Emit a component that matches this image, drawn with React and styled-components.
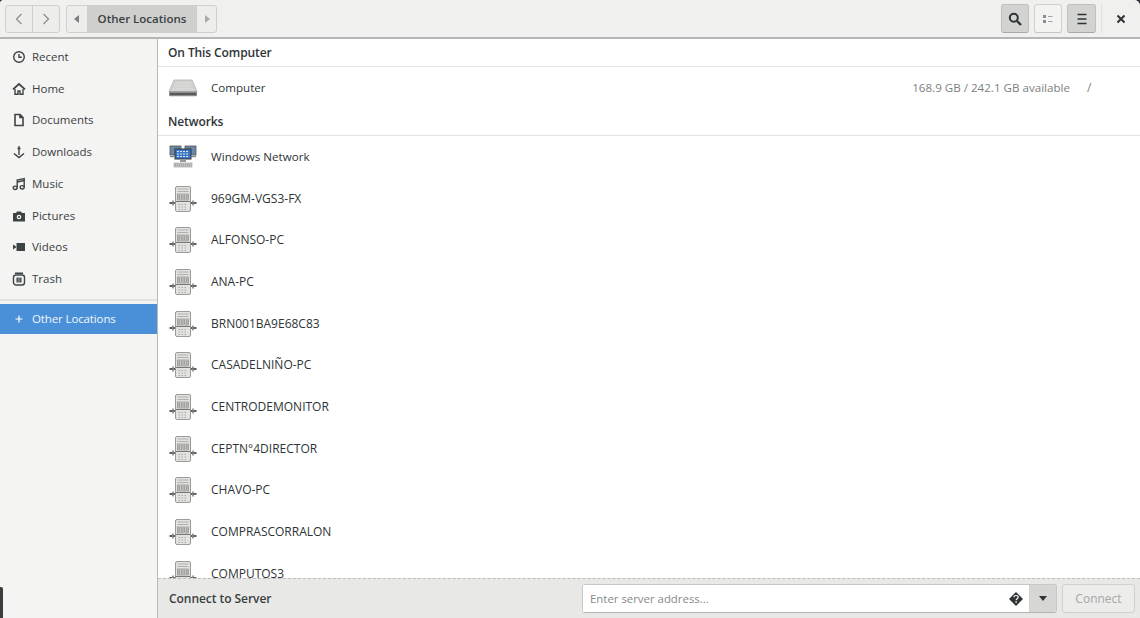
import styled, { createGlobalStyle } from 'styled-components'

const GlobalStyle = createGlobalStyle`
  html, body {
    margin: 0;
    padding: 0;
    background: #2e3032;
  }
  * {
    box-sizing: border-box;
  }
`

const places = [
  { name: 'Recent', icon: 'recent' },
  { name: 'Home', icon: 'home' },
  { name: 'Documents', icon: 'documents' },
  { name: 'Downloads', icon: 'downloads' },
  { name: 'Music', icon: 'music' },
  { name: 'Pictures', icon: 'pictures' },
  { name: 'Videos', icon: 'videos' },
  { name: 'Trash', icon: 'trash' },
]

const hosts = [
  '969GM-VGS3-FX',
  'ALFONSO-PC',
  'ANA-PC',
  'BRN001BA9E68C83',
  'CASADELNIÑO-PC',
  'CENTRODEMONITOR',
  'CEPTN°4DIRECTOR',
  'CHAVO-PC',
  'COMPRASCORRALON',
  'COMPUTOS3',
]

function PlaceIcon({ kind }) {
  const stroke = { fill: 'none', stroke: '#3d4345', strokeWidth: 1.4 }
  return (
    <svg width="14" height="14" viewBox="0 0 14 14">
      {kind === 'recent' && (
        <>
          <circle cx="7" cy="7" r="5.3" {...stroke} />
          <path d="M7 4v3.2h2.8" {...stroke} />
        </>
      )}
      {kind === 'home' && (
        <>
          <path d="M1 7.4 7 2l6 5.4" {...stroke} strokeWidth="1.7" />
          <path d="M3 7v5.2h3V9h2v3.2h3V7" {...stroke} />
        </>
      )}
      {kind === 'documents' && <path d="M3 1.500h5l3 3v8H3zM8 1.500v3h3" {...stroke} strokeWidth="1.600" />}
      {kind === 'downloads' && (
        <>
          <path d="M7 1v9" {...stroke} />
          <path d="M5.500 3.500h3" {...stroke} />
          <path d="M2 8.500 7 12.500l5-4" {...stroke} strokeWidth="1.600" />
        </>
      )}
      {kind === 'music' && (
        <>
          <path d="M5.200 10.500V3l7-1.500v8.500" {...stroke} />
          <path d="M5.200 5l7-1.500" {...stroke} />
          <ellipse cx="3.200" cy="10.800" rx="2" ry="1.700" {...stroke} />
          <ellipse cx="10.200" cy="10.300" rx="2" ry="1.700" {...stroke} />
        </>
      )}
      {kind === 'pictures' && (
        <>
          <path d="M1 4h3l1-1.500h4L10 4h3v8.500H1z" fill="#3d4345" />
          <circle cx="7" cy="8" r="2.300" fill="#f4f4f3" />
          <circle cx="7" cy="8" r="1.100" fill="#3d4345" />
        </>
      )}
      {kind === 'videos' && (
        <>
          <rect x="4.500" y="3" width="8.500" height="8" fill="#3d4345" />
          <path d="M1 4.500 4 6.500v1L1 9.500z" fill="#3d4345" />
        </>
      )}
      {kind === 'trash' && (
        <>
          <rect x="1.500" y="3" width="11" height="10" rx="2.500" {...stroke} />
          <path d="M3 1.200h8M5.200 5.500v5M7 5.500v5M8.800 5.500v5" {...stroke} />
        </>
      )}
    </svg>
  )
}

function DriveIcon() {
  return (
    <svg width="30" height="20" viewBox="0 0 30 20">
      <path d="M6 2h18l5 11.500H1z" fill="#d2d2d0" stroke="#b0b0ae" strokeWidth="0.8" />
      <path d="M1 13.500h28v3.800a1 1 0 0 1-1 1H2a1 1 0 0 1-1-1z" fill="#8a8c8c" />
      <path d="M2 16h26" stroke="#47494a" strokeWidth="1.300" />
      <path d="M8 5h14M7 8h16M5 11h20" stroke="#e2e2e0" strokeWidth="1" strokeDasharray="2 1" />
    </svg>
  )
}

function WindowsNetworkIcon() {
  return (
    <svg width="28" height="24" viewBox="0 0 28 24">
      <rect x="1" y="1" width="11" height="9" fill="#6a88a6" stroke="#555" strokeWidth="0.8" />
      <rect x="16" y="1" width="11" height="9" fill="#6a88a6" stroke="#555" strokeWidth="0.8" />
      <rect x="6" y="4" width="16" height="10" fill="#3a78c6" stroke="#333" strokeWidth="1" />
      <path d="M8 6.500h12M8 9h12M8 11.500h12" stroke="#dbe5ee" strokeWidth="1" strokeDasharray="2 1" />
      <path d="M1 11.500h5M22 11.500h5" stroke="#888" strokeWidth="1.500" />
      <rect x="11" y="15" width="6" height="2" fill="#999" />
      <rect x="5" y="18" width="18" height="4" fill="#c4c4c4" stroke="#999" strokeWidth="0.6" />
      <path d="M6 20h16" stroke="#777" strokeWidth="0.800" strokeDasharray="1 1" />
    </svg>
  )
}

function ServerIcon() {
  return (
    <svg width="28" height="28" viewBox="0 0 28 28">
      <path d="M0.500 18h6M21.500 18h6" stroke="#5d5d5d" strokeWidth="2.200" />
      <path d="M4 15.500v5M24 15.500v5" stroke="#808080" strokeWidth="1.500" />
      <rect x="6.500" y="1.500" width="15" height="25" rx="1.500" fill="#e2e2e0" stroke="#9a9a98" strokeWidth="1" />
      <path d="M8.500 4h11M8.500 6.500h11" stroke="#b0b0ae" strokeWidth="1" />
      <rect x="8.500" y="9" width="11" height="6" fill="#c8c8c6" stroke="#808080" strokeWidth="0.600" />
      <path d="M9.500 11h9M9.500 13h9" stroke="#666" strokeWidth="0.800" strokeDasharray="1.500 1" />
      <path d="M6.500 16.500h15" stroke="#787878" strokeWidth="1" />
      <path d="M9.500 19.500h9M9.500 22h9M9.500 24.500h9" stroke="#a8a8a6" strokeWidth="1" strokeDasharray="1.500 1.500" />
    </svg>
  )
}

function App() {
  return (
    <>
      <GlobalStyle />
      <Window>
        <HeaderBar>
          <Linked>
            <HeaderButton $width={26}>
              <svg width="12" height="14" viewBox="0 0 12 14">
                <path d="M8.500 2 3.500 7l5 5" fill="none" stroke="#8d9092" strokeWidth="1.300" />
              </svg>
            </HeaderButton>
            <HeaderButton $width={27}>
              <svg width="12" height="14" viewBox="0 0 12 14">
                <path d="M3.500 2l5 5-5 5" fill="none" stroke="#8d9092" strokeWidth="1.300" />
              </svg>
            </HeaderButton>
          </Linked>
          <PathBar>
            <PathArrow $width={20}>
              <svg width="6" height="8" viewBox="0 0 6 8">
                <path d="M5 0v8L0 4z" fill="#7c7f80" />
              </svg>
            </PathArrow>
            <PathCurrent>Other Locations</PathCurrent>
            <PathArrow $width={19}>
              <svg width="6" height="8" viewBox="0 0 6 8">
                <path d="M1 0v8l5-4z" fill="#a8aaab" />
              </svg>
            </PathArrow>
          </PathBar>
          <Spacer />
          <ToolGroup>
            <ToolButton $pressed $width={28}>
              <svg width="16" height="16" viewBox="0 0 16 16">
                <circle cx="6.800" cy="6.800" r="4" fill="none" stroke="#2e3436" strokeWidth="2" />
                <path d="m10 10 4 4" stroke="#2e3436" strokeWidth="2.400" />
              </svg>
            </ToolButton>
            <ToolButton $width={28}>
              <svg width="12" height="10" viewBox="0 0 12 10">
                <path d="M1 1h3v3H1zM1 6h3v3H1z" fill="#8a8c8d" />
                <path d="M6 2.500h4.500M6 7.500h4.500" stroke="#a0a2a3" strokeWidth="1.200" />
              </svg>
            </ToolButton>
            <ToolButton $pressed $width={29}>
              <svg width="14" height="12" viewBox="0 0 14 12">
                <path d="M2.500 1.500h9M2.500 6h9M2.500 10.500h9" stroke="#2e3436" strokeWidth="1.600" />
              </svg>
            </ToolButton>
          </ToolGroup>
          <CloseZone>
            <svg width="10" height="10" viewBox="0 0 10 10">
              <path d="m1.500 1.500 7 7M8.500 1.500l-7 7" stroke="#2e3436" strokeWidth="2" />
            </svg>
          </CloseZone>
        </HeaderBar>
        <Body>
          <Sidebar>
            <PlaceList>
              {places.map((p) => (
                <Place key={p.name}>
                  <PlaceIcon kind={p.icon} />
                  <PlaceName>{p.name}</PlaceName>
                </Place>
              ))}
            </PlaceList>
            <SideDivider />
            <ActivePlace>
              <svg width="14" height="14" viewBox="0 0 14 14">
                <path d="M7 3.500v7M3.500 7h7" stroke="#fff" strokeWidth="1.200" />
              </svg>
              <ActiveName>Other Locations</ActiveName>
            </ActivePlace>
          </Sidebar>
          <Main>
            <Listing>
              <SectionTitle>On This Computer</SectionTitle>
              <ComputerRow>
                <IconSlot>
                  <DriveIcon />
                </IconSlot>
                <RowName>Computer</RowName>
                <RowInfo>168.9 GB / 242.1 GB available</RowInfo>
                <RowMount>/</RowMount>
              </ComputerRow>
              <SectionTitle>Networks</SectionTitle>
              <NetworkRow>
                <IconSlot>
                  <WindowsNetworkIcon />
                </IconSlot>
                <RowName>Windows Network</RowName>
              </NetworkRow>
              {hosts.map((h) => (
                <HostRow key={h}>
                  <IconSlot>
                    <ServerIcon />
                  </IconSlot>
                  <HostName>{h}</HostName>
                </HostRow>
              ))}
            </Listing>
            <ConnectBar>
              <ConnectLabel>Connect to Server</ConnectLabel>
              <AddressCombo>
                <AddressInput>
                  <Placeholder>Enter server address...</Placeholder>
                  <svg width="16" height="16" viewBox="0 0 16 16">
                    <path d="M8 1l7 7-7 7-7-7z" fill="#2e3436" />
                    <path d="M5.900 6.300C6 5 7 4.500 8 4.500c1.300 0 2.200.8 2.200 1.800 0 1.500-2 1.500-2.100 3" fill="none" stroke="#fff" strokeWidth="1.200" />
                    <path d="M7.400 10.300h1.400v1.400H7.400z" fill="#fff" />
                  </svg>
                </AddressInput>
                <ComboArrow>
                  <svg width="8" height="5" viewBox="0 0 8 5">
                    <path d="M0 0h8L4 5z" fill="#2e3436" />
                  </svg>
                </ComboArrow>
              </AddressCombo>
              <ConnectButton>Connect</ConnectButton>
            </ConnectBar>
          </Main>
        </Body>
        <EdgeShadow />
      </Window>
    </>
  )
}

const Window = styled.div`
  position: relative;
  width: 1140px;
  height: 618px;
  display: flex;
  flex-direction: column;
  overflow: hidden;
  border-radius: 4px 6px 0 0;
  font-family: 'Open Sans', 'Noto Sans', sans-serif;
  font-size: 12px;
  color: #2e3436;
  background: #fff;
`
const HeaderBar = styled.div`
  height: 39px;
  flex: none;
  display: flex;
  align-items: center;
  padding: 0 0 0 5px;
  background: #f0f0ee;
  border-bottom: 2px solid #b5b6b5;
`
const Linked = styled.div`
  display: flex;
  height: 28px;
  border: 1px solid #cfcfcd;
  border-radius: 3px;
  background: #ededeb;
`
const HeaderButton = styled.div`
  width: ${(p) => p.$width}px;
  display: flex;
  align-items: center;
  justify-content: center;
  & + & {
    border-left: 1px solid #cfcfcd;
  }
`
const PathBar = styled(Linked)`
  margin-left: 6px;
`
const PathArrow = styled.div`
  width: ${(p) => p.$width}px;
  display: flex;
  align-items: center;
  justify-content: center;
`
const PathCurrent = styled.div`
  width: 110px;
  display: flex;
  align-items: center;
  justify-content: center;
  background: #cfcfcd;
  font-weight: 600;
  font-size: 11.5px;
  color: #3a4042;
`
const Spacer = styled.div`
  flex: 1;
`
const ToolGroup = styled.div`
  display: flex;
  gap: 5px;
  padding-right: 5px;
  border-right: 1px solid #e0e0de;
  height: 29px;
`
const ToolButton = styled.div`
  width: ${(p) => p.$width}px;
  height: 29px;
  display: flex;
  align-items: center;
  justify-content: center;
  border: 1px solid ${(p) => (p.$pressed ? '#c0c0be' : '#d0d0ce')};
  border-bottom-color: ${(p) => (p.$pressed ? '#a8a8a6' : '#c4c4c2')};
  border-radius: 3px;
  background: ${(p) => (p.$pressed ? '#d3d3d1' : '#f3f3f1')};
`
const CloseZone = styled.div`
  width: 38px;
  display: flex;
  align-items: center;
  justify-content: center;
`
const Body = styled.div`
  flex: 1;
  min-height: 0;
  display: flex;
`
const Sidebar = styled.div`
  width: 158px;
  flex: none;
  padding-top: 2px;
  background: #f4f4f3;
  border-right: 1px solid #b9bab9;
`
const PlaceList = styled.div`
  display: flex;
  flex-direction: column;
`
const Place = styled.div`
  height: 31.75px;
  display: flex;
  align-items: center;
  gap: 6px;
  padding-left: 12px;
`
const PlaceName = styled.span`
  font-size: 11.5px;
  line-height: 14px;
  color: #3a4042;
`
const SideDivider = styled.div`
  height: 2px;
  margin-top: 3.5px;
  background: #e2e2e0;
`
const ActivePlace = styled.div`
  height: 29.5px;
  margin-top: 3.5px;
  display: flex;
  align-items: center;
  gap: 6px;
  padding-left: 12px;
  background: #4a90d9;
`
const ActiveName = styled.span`
  font-size: 11.5px;
  letter-spacing: -0.12px;
  color: #f2f6fb;
`
const Main = styled.div`
  flex: 1;
  min-width: 0;
  display: flex;
  flex-direction: column;
`
const Listing = styled.div`
  flex: 1;
  min-height: 0;
  overflow: hidden;
  background: #fff;
`
const SectionTitle = styled.div`
  height: 28px;
  padding: 5px 0 0 10px;
  font-weight: 600;
  font-size: 12px;
  letter-spacing: -0.1px;
  color: #2e3436;
  border-bottom: 1px solid #e4e4e2;
`
const Row = styled.div`
  display: flex;
  align-items: center;
`
const ComputerRow = styled(Row)`
  height: 41px;
`
const NetworkRow = styled(Row)`
  height: 42px;
`
const HostRow = styled(Row)`
  height: 41.67px;
`
const IconSlot = styled.div`
  width: 53px;
  flex: none;
  display: flex;
  justify-content: center;
  padding-right: 3px;
`
const RowName = styled.span`
  flex: 1;
  font-size: 11.6px;
  line-height: 10px;
  color: #2e3436;
`
const HostName = styled(RowName)`
  font-size: 12px;
`
const RowInfo = styled.span`
  font-size: 11.6px;
  color: #7b7f80;
`
const RowMount = styled.span`
  width: 70px;
  padding-left: 17px;
  color: #7b7f80;
`
const ConnectBar = styled.div`
  height: 40px;
  flex: none;
  display: flex;
  align-items: center;
  padding: 0 5px 0 11px;
  background: #e8e8e7;
  border-top: 1px dashed #bdbdbb;
`
const ConnectLabel = styled.span`
  flex: 1;
  font-weight: 600;
  letter-spacing: -0.05px;
  color: #3a4042;
`
const AddressCombo = styled.div`
  display: flex;
  width: 475px;
  height: 29px;
  border: 1px solid #c8c8c6;
  border-bottom-color: #b4b4b2;
  border-radius: 3px;
`
const AddressInput = styled.div`
  flex: 1;
  display: flex;
  align-items: center;
  justify-content: space-between;
  padding: 0 5px 0 7px;
  background: #fff;
`
const Placeholder = styled.span`
  font-size: 11.4px;
  color: #868a8b;
`
const ComboArrow = styled.div`
  width: 27px;
  display: flex;
  align-items: center;
  justify-content: center;
  background: #d6d6d4;
  border-left: 1px solid #d0d0ce;
`
const ConnectButton = styled.div`
  width: 73px;
  height: 29px;
  margin-left: 5px;
  display: flex;
  align-items: center;
  justify-content: center;
  border: 1px solid #d0d0ce;
  border-radius: 3px;
  background: #ececea;
  color: #a4a7a8;
`
const EdgeShadow = styled.div`
  position: absolute;
  left: 0;
  bottom: 0;
  width: 3px;
  height: 31px;
  border-top-right-radius: 2px;
  background: #3a3c3e;
`
export default App
